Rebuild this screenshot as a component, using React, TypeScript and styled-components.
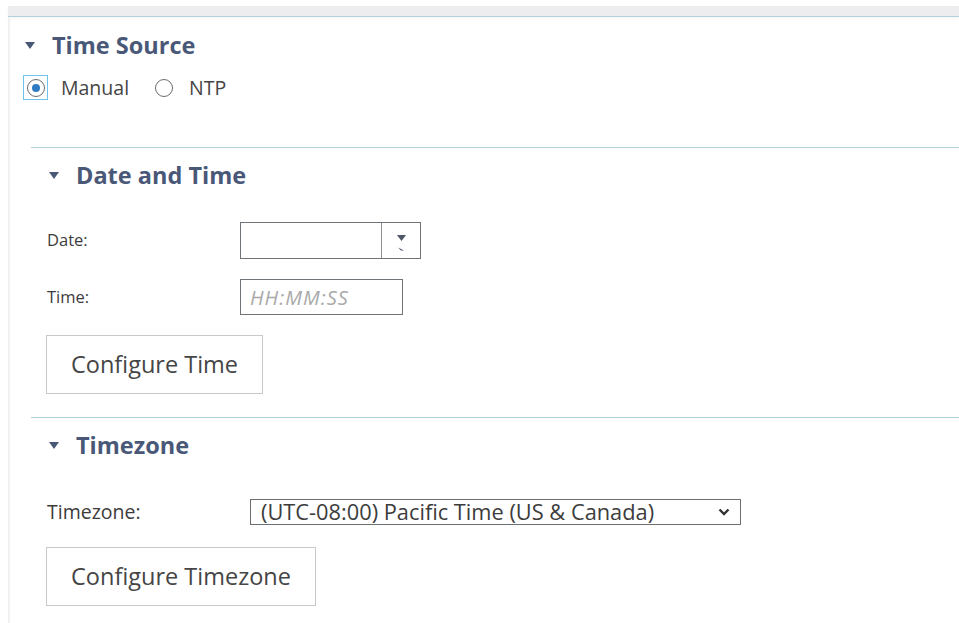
import React, { useState } from 'react';
import styled, { createGlobalStyle } from 'styled-components';

const GlobalStyle = createGlobalStyle`
  html, body {
    margin: 0;
    padding: 0;
    background: #ffffff;
  }
  body {
    font-family: "Open Sans", "Noto Sans", Arial, sans-serif;
    color: #444;
  }
`;

const Page = styled.div`
  width: 959px;
  height: 623px;
  overflow: hidden;
  padding: 6px 0 0 8px;
  box-sizing: border-box;
`;

const TopBar = styled.div`
  height: 10px;
  background: #ededef;
  border-bottom: 1px solid #b0d2dc;
  box-shadow: 0 2px 4px rgba(0, 0, 0, 0.04);
`;

const Panel = styled.div`
  border-left: 2px solid #f1f1f1;
  height: 620px;
  padding-top: 16px;
`;

const Heading = styled.div<{ $indent: number }>`
  display: flex;
  align-items: center;
  height: 24px;
  line-height: 24px;
  padding-left: ${(p) => p.$indent}px;
  gap: 17px;
  font-size: 23.5px;
  font-weight: 700;
  color: #4a5878;
`;

const Caret = styled.span`
  width: 0;
  height: 0;
  border-left: 5.5px solid transparent;
  border-right: 5.5px solid transparent;
  border-top: 7px solid #4a5878;
`;

const RadioRow = styled.div`
  display: flex;
  align-items: center;
  height: 25px;
  line-height: 25px;
  padding-left: 13px;
  margin-top: 18px;
  font-size: 19.5px;
  color: #454545;
`;

const RadioLabel = styled.label`
  display: flex;
  align-items: center;
  margin-right: 22px;
  cursor: pointer;
`;

const RadioBox = styled.span<{ $focused?: boolean }>`
  width: 25px;
  height: 25px;
  box-sizing: border-box;
  display: flex;
  align-items: center;
  justify-content: center;
  border: 1px solid ${(p) => (p.$focused ? '#6ec4e8' : 'transparent')};
  margin-right: 13px;
`;

const RadioRing = styled.span<{ $checked?: boolean }>`
  width: 18px;
  height: 18px;
  box-sizing: border-box;
  border-radius: 50%;
  border: 1.5px solid #6c6c6c;
  display: flex;
  align-items: center;
  justify-content: center;
  &::after {
    content: '';
    width: 8px;
    height: 8px;
    border-radius: 50%;
    background: ${(p) => (p.$checked ? '#2f7cc6' : 'transparent')};
  }
`;

const Section = styled.div<{ $top: number }>`
  margin: ${(p) => p.$top}px 0 0 21px;
  border-top: 1px solid #b0d2dc;
  padding-top: 15px;
`;

const FieldRow = styled.div<{ $top: number }>`
  display: flex;
  align-items: center;
  margin-top: ${(p) => p.$top}px;
  padding-left: 16px;
  color: #3c3c3c;
`;

const FieldLabel = styled.span<{ $width: number; $size: number }>`
  width: ${(p) => p.$width}px;
  flex: none;
  font-size: ${(p) => p.$size}px;
  line-height: 1;
`;

const DateBox = styled.div`
  display: flex;
  width: 181px;
  height: 37px;
  box-sizing: border-box;
  border: 1px solid #6f7479;
`;

const DateField = styled.div`
  flex: 1;
  border-right: 1px solid #8a8f94;
`;

const DateToggle = styled.div`
  width: 38px;
  display: flex;
  flex-direction: column;
  align-items: center;
  justify-content: center;
  gap: 6px;
  padding-top: 4px;
`;

const TimeInput = styled.input`
  width: 163px;
  height: 36px;
  box-sizing: border-box;
  border: 1px solid #6f7479;
  padding: 0 9px;
  font-family: inherit;
  font-size: 20px;
  letter-spacing: 1px;
  outline: none;
  &::placeholder {
    color: #a9a9a9;
    font-style: italic;
  }
`;

const ActionButton = styled.button<{ $top: number; $width: number }>`
  display: block;
  margin: ${(p) => p.$top}px 0 0 15px;
  width: ${(p) => p.$width}px;
  height: 59px;
  background: #fff;
  border: 1px solid #c9c9c9;
  font-family: inherit;
  font-size: 23.5px;
  color: #454545;
  padding: 0 0 2px;
  cursor: pointer;
  white-space: nowrap;
`;

const ZoneSelect = styled.div`
  position: relative;
  width: 491px;
  height: 26px;
  box-sizing: border-box;
  border: 1px solid #6a6f74;
  display: flex;
  align-items: center;
  padding-left: 10px;
  font-size: 21.8px;
  line-height: 1;
  color: #3c3c3c;
  white-space: nowrap;
`;

const Chevron = styled.svg`
  position: absolute;
  right: 10px;
  top: 8px;
`;

export default function App() {
  const [source, setSource] = useState<'manual' | 'ntp'>('manual');

  return (
    <>
      <GlobalStyle />
      <Page>
        <TopBar />
        <Panel>
          <Heading $indent={15}>
            <Caret />
            Time Source
          </Heading>

          <RadioRow>
            <RadioLabel onClick={() => setSource('manual')}>
              <RadioBox $focused={source === 'manual'}>
                <RadioRing $checked={source === 'manual'} />
              </RadioBox>
              Manual
            </RadioLabel>
            <RadioLabel onClick={() => setSource('ntp')}>
              <RadioBox $focused={source === 'ntp'}>
                <RadioRing $checked={source === 'ntp'} />
              </RadioBox>
              NTP
            </RadioLabel>
          </RadioRow>

          <Section $top={47}>
            <Heading $indent={18}>
              <Caret />
              Date and Time
            </Heading>

            <FieldRow $top={35}>
              <FieldLabel $width={193} $size={16.5}>Date:</FieldLabel>
              <DateBox>
                <DateField />
                <DateToggle>
                  <svg width="9" height="6" viewBox="0 0 9 6">
                    <path d="M0 0h9L4.5 6z" fill="#4d5566" />
                  </svg>
                  <svg width="6" height="4" viewBox="0 0 6 4">
                    <path d="M0 0.5l6 3H3z" fill="#4d5566" />
                  </svg>
                </DateToggle>
              </DateBox>
            </FieldRow>

            <FieldRow $top={20}>
              <FieldLabel $width={193} $size={16.5}>Time:</FieldLabel>
              <TimeInput placeholder="HH:MM:SS" />
            </FieldRow>

            <ActionButton $top={20} $width={217}>
              Configure Time
            </ActionButton>
          </Section>

          <Section $top={23}>
            <Heading $indent={18}>
              <Caret />
              Timezone
            </Heading>

            <FieldRow $top={42}>
              <FieldLabel $width={203} $size={19.5}>Timezone:</FieldLabel>
              <ZoneSelect>
                (UTC-08:00) Pacific Time (US &amp; Canada)
                <Chevron width="12" height="8" viewBox="0 0 12 8">
                  <path d="M1.5 1.5l4.5 4.5 4.5-4.5" fill="none" stroke="#333" strokeWidth="2.4" />
                </Chevron>
              </ZoneSelect>
            </FieldRow>

            <ActionButton $top={22} $width={270}>
              Configure Timezone
            </ActionButton>
          </Section>
        </Panel>
      </Page>
    </>
  );
}
